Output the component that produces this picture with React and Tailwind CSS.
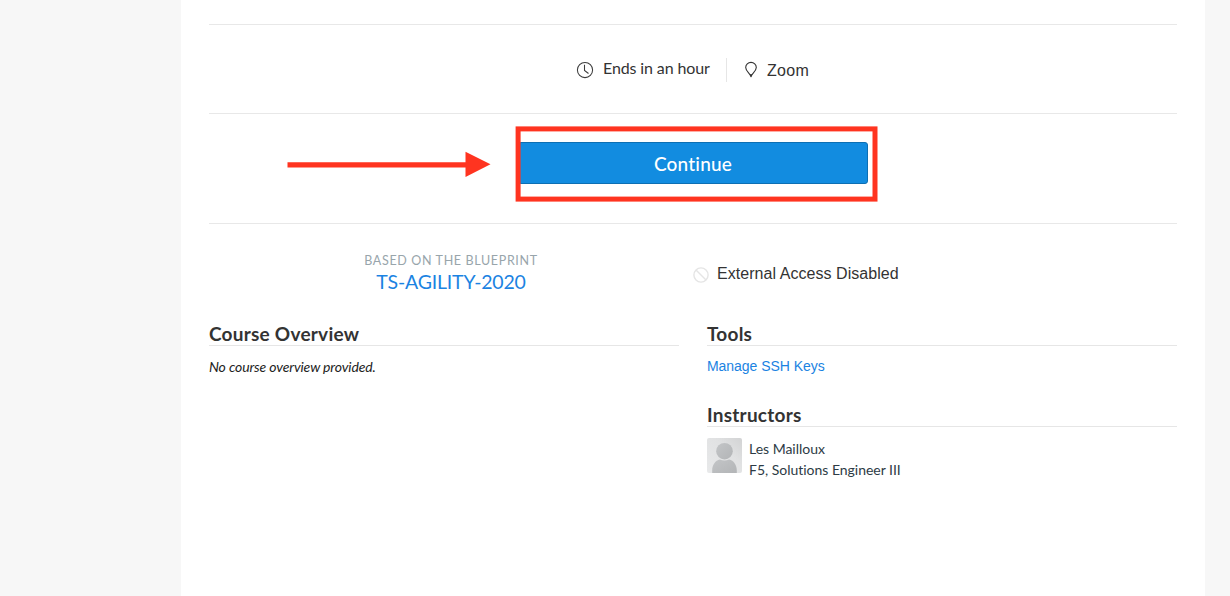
const lato = "font-['Lato',sans-serif] [font-variant-ligatures:none]";
const arial = "font-['Liberation_Sans',sans-serif]";

function ClockIcon() {
  return (
    <svg width="18" height="18" viewBox="0 0 18 18" fill="none" stroke="#3c3c3c" strokeWidth="1.05" className="block shrink-0">
      <circle cx="9" cy="9" r="7.6" />
      <path d="M8.500 3.800v5.600l4 3.100" />
    </svg>
  );
}

function PinIcon() {
  return (
    <svg width="14" height="18" viewBox="0 0 14 18" fill="none" stroke="#333" strokeWidth="1.1" className="block shrink-0">
      <path d="M7 15.800C6.700 12.700 1.700 10.400 1.700 6.500a5.300 5.100 0 0 1 10.600 0c0 3.900-5 6.200-5.300 9.300z" />
      <path d="M5.800 13.300h2.400L7 16.700z" fill="#333" stroke="none" />
    </svg>
  );
}

function Avatar() {
  return (
    <svg width="35" height="35" viewBox="0 0 35 35" className="block shrink-0 rounded-[2px]">
      <defs>
        <linearGradient id="backdrop" x1="0" y1="1" x2="1" y2="0">
          <stop offset="0" stopColor="#e8e9ea" />
          <stop offset="0.6" stopColor="#e1e2e3" />
          <stop offset="1" stopColor="#d2d3d4" />
        </linearGradient>
        <linearGradient id="person" x1="0" y1="0" x2="1" y2="1">
          <stop offset="0" stopColor="#c3c5c7" />
          <stop offset="1" stopColor="#b3b5b7" />
        </linearGradient>
      </defs>
      <rect width="35" height="35" fill="url(#backdrop)" />
      <path d="M5.200 35v-2.500C5.200 26.500 8.500 22.500 12.800 21.500q4.700 2.200 9.400 0c4.300 1 7.600 5 7.600 11V35z" fill="url(#person)" />
      <circle cx="17.500" cy="13.200" r="8.300" fill="url(#person)" />
    </svg>
  );
}

function SectionTitle({ children }) {
  return (
    <h2 className={`${lato} h-[25px] border-b border-[#e6e6e6] text-[19px] leading-[26px] font-bold tracking-[0.24px] text-[#333]`}>
      {children}
    </h2>
  );
}

export default function App() {
  return (
    <div className="h-[596px] overflow-hidden bg-[#f7f7f7] pl-[181px] text-[#333]">
      <main className="h-full w-[1024px] bg-white px-7 pt-6">
        <section className="flex h-[89px] border-t border-[#e8e8e8] pt-[33px] pl-[367px]">
          <div className={`${lato} flex h-6 w-[151px] items-start border-r border-[#e6e6e6]`}>
            <div className="pt-[3px]"><ClockIcon /></div>
            <span className="ml-[9px] text-[16px] leading-5 tracking-[-0.12px] whitespace-nowrap">Ends in an hour</span>
          </div>
          <div className={`${arial} flex items-start pl-[17px]`}>
            <div className="pt-[3px]"><PinIcon /></div>
            <span className="ml-[9px] text-[16px] leading-[26px] tracking-[0.3px]">Zoom</span>
          </div>
        </section>

        <section className="relative h-[110px] border-t border-[#e8e8e8] pt-7 pl-[309px]">
          <button className={`${lato} block h-[42px] w-[350px] rounded-[3px] border border-[#0d6fb3] bg-[#128ce0] text-[19px] leading-[42px] font-medium tracking-[0.2px] text-white`}>
            Continue
          </button>
          <svg width="204" height="26" viewBox="0 0 204 26" className="absolute top-[37px] left-[78px]">
            <path d="M0.500 11.200H178.500V0.700L203.500 13.300L178.500 25.900V16.400H0.500z" fill="#ff3420" />
          </svg>
          <svg width="364" height="77" viewBox="0 0 364 77" className="pointer-events-none absolute top-[12px] left-[306px]">
            <rect x="3.100" y="2.900" width="356.900" height="70.200" fill="none" stroke="#ff3420" strokeWidth="5" />
          </svg>
        </section>

        <section className="flex h-[100px] border-t border-[#e8e8e8]">
          <div className={`${lato} w-1/2 pt-[29px] text-center`}>
            <p className="text-[12.5px] leading-4 font-normal tracking-[0.65px] text-[#98a5ab]">BASED ON THE BLUEPRINT</p>
            <a className="block text-[19.5px] leading-[26px] tracking-[-0.18px] text-[#1b83e2]">TS-AGILITY-2020</a>
          </div>
          <div className={`${arial} flex w-1/2 items-start pt-[38px]`}>
            <svg width="16" height="16" viewBox="0 0 16 16" fill="none" stroke="#e5e5e5" strokeWidth="1.400" className="mt-[5px] block">
              <circle cx="8" cy="8" r="7.100" />
              <path d="M3 3l10 10" />
            </svg>
            <span className="ml-2 text-[16px] leading-6 tracking-[0.05px]">External Access Disabled</span>
          </div>
        </section>

        <section className="-mt-[2px] grid grid-cols-2 gap-7">
          <div>
            <SectionTitle>Course Overview</SectionTitle>
            <p className={`${lato} pt-[11px] text-[14px] leading-5 tracking-[-0.12px] text-[#222] italic`}>No course overview provided.</p>
          </div>
          <div>
            <SectionTitle>Tools</SectionTitle>
            <a className={`${arial} block h-14 pt-[10px] text-[14px] leading-5 tracking-[-0.04px] text-[#1b83e2]`}>Manage SSH Keys</a>
            <SectionTitle>Instructors</SectionTitle>
            <div className="flex gap-[7px] pt-[11px]">
              <Avatar />
              <div className={`${lato} text-[14px] leading-[21px] tracking-[-0.02px] text-[#2d3b45]`}>
                <p>Les Mailloux</p>
                <p>F5, Solutions Engineer III</p>
              </div>
            </div>
          </div>
        </section>
      </main>
    </div>
  );
}
